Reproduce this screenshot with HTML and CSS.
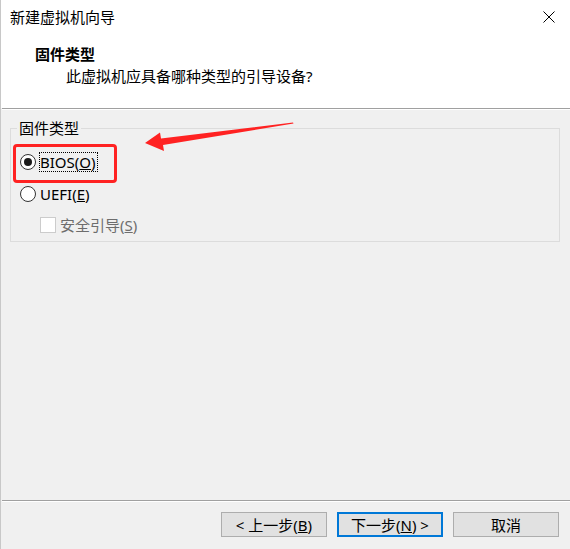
FILE: index.html
```html
<!DOCTYPE html>
<html lang="zh-CN">
<head>
<meta charset="utf-8">
<title>新建虚拟机向导</title>
<link rel="stylesheet" href="styles.css">
</head>
<body>
<div class="window">
  <header class="header">
    <div class="titlebar">
      <span class="title">新建虚拟机向导</span>
      <svg class="close" width="12" height="12" viewBox="0 0 12 12"><path d="M0.5 0.5 L11.5 11.5 M11.5 0.5 L0.5 11.5" stroke="#000" stroke-width="1" fill="none"/></svg>
    </div>
    <div class="page-title">固件类型</div>
    <div class="page-sub">此虚拟机应具备哪种类型的引导设备?</div>
  </header>
  <div class="sep sep-top"></div>
  <main class="content">
    <fieldset class="group">
      <legend class="group-label">固件类型</legend>
      <div class="row">
        <span class="radio checked"></span>
        <span class="lbl focus">BIOS(<u>O</u>)</span>
      </div>
      <div class="row row-gap">
        <span class="radio"></span>
        <span class="lbl">UEFI(<u>E</u>)</span>
      </div>
      <div class="row row-sub disabled">
        <span class="check"></span>
        <span class="lbl">安全引导(<u>S</u>)</span>
      </div>
    </fieldset>
  </main>
  <div class="sep"></div>
  <footer class="footer">
    <button class="btn">&lt; 上一步(<u>B</u>)</button>
    <button class="btn btn-default">下一步(<u>N</u>) &gt;</button>
    <button class="btn">取消</button>
  </footer>

  <div class="annot-box"></div>
  <svg class="annot-arrow" width="160" height="40" viewBox="0 0 160 40">
    <polygon points="5,28 20,17.5 21,23.5 153,7.5 153.5,8.5 23,30 24,36" fill="#ff2222"/>
  </svg>
</div>
</body>
</html>
```

FILE: styles.css
```css
* { box-sizing: border-box; }

html, body {
  margin: 0;
  padding: 0;
}

body {
  width: 570px;
  height: 549px;
  background: #f0f0f0;
  font-family: "Noto Sans", "Noto Sans CJK SC", sans-serif;
  font-size: 15px;
  color: #000;
  overflow: hidden;
}

.window {
  position: relative;
  width: 570px;
  height: 549px;
  display: flex;
  flex-direction: column;
  background: #f0f0f0;
  box-shadow: inset 1px 0 0 #c8c8c8;
}

.header {
  height: 108px;
  background: #fff;
  padding-top: 7px;
  box-shadow: inset 1px 0 0 #c8c8c8;
}

.titlebar {
  display: flex;
  justify-content: space-between;
  align-items: center;
  height: 20px;
  line-height: 20px;
  padding: 0 15px 0 10px;
}

.close { display: block; }

.page-title {
  margin-top: 17px;
  padding-left: 35px;
  font-weight: bold;
  line-height: 20px;
}

.page-sub {
  margin-top: 2px;
  padding-left: 66px;
  line-height: 20px;
}

.sep {
  height: 2px;
  margin-left: 2px;
  border-top: 1px solid #a0a0a0;
  border-bottom: 1px solid #fff;
}

.content {
  flex: 1;
  padding-top: 8px;
}

.group {
  margin: 0 10px;
  padding: 14px 6px 6px 6px;
  border: 1px solid #dcdcdc;
  min-width: 0;
}

.group-label {
  padding: 0 2px;
  line-height: 20px;
}

.row {
  display: flex;
  align-items: center;
  height: 20px;
  margin-left: 3px;
}

.row-gap { margin-top: 12px; }

.row-sub {
  margin-top: 11px;
  margin-left: 23px;
}

.radio {
  width: 16px;
  height: 16px;
  border: 1px solid #333;
  border-radius: 50%;
  background: #fff;
  display: flex;
  align-items: center;
  justify-content: center;
  flex: none;
}

.radio.checked::after {
  content: "";
  width: 8px;
  height: 8px;
  border-radius: 50%;
  background: #1a1a1a;
}

.check {
  width: 16px;
  height: 16px;
  border: 1px solid #cccccc;
  background: #fff;
  flex: none;
}

.lbl {
  margin-left: 3px;
  line-height: 18px;
  border: 1px dotted transparent;
  padding: 0 1px 0 0;
}

.lbl.focus { border-color: #000; }

.disabled .lbl { color: #6d6d6d; }

.footer {
  height: 47px;
  display: flex;
  justify-content: flex-end;
  align-items: flex-start;
  gap: 10px;
  padding: 10px 11px 0 0;
}

.btn {
  width: 106px;
  height: 25px;
  padding: 0;
  border: 1px solid #adadad;
  background: #e1e1e1;
  font: inherit;
  line-height: 20px;
  color: #000;
}

.btn-default { border: 2px solid #0078d7; }

.annot-box {
  position: absolute;
  left: 13px;
  top: 144px;
  width: 104px;
  height: 39px;
  border: 3px solid #ff2222;
  border-radius: 4px;
}

.annot-arrow {
  position: absolute;
  left: 140px;
  top: 115px;
}
```
